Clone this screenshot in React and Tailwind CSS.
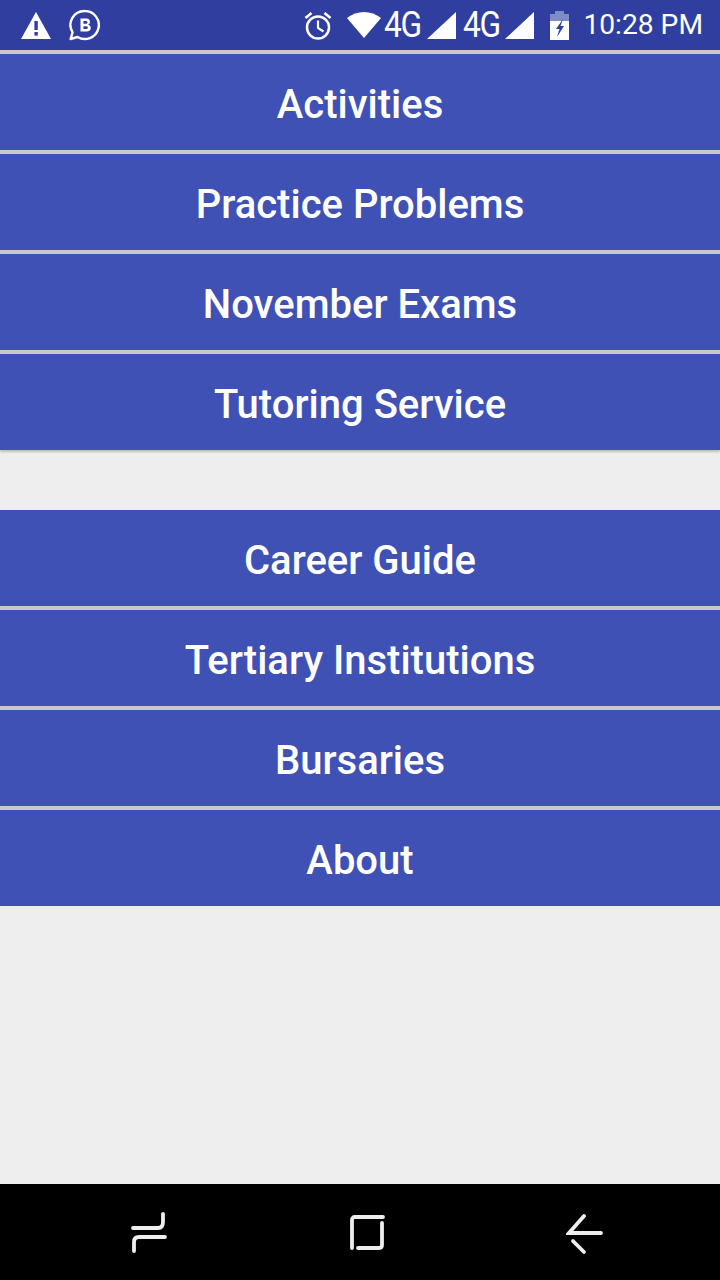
import React from 'react';

const topItems = ['Activities', 'Practice Problems', 'November Exams', 'Tutoring Service'];
const bottomItems = ['Career Guide', 'Tertiary Institutions', 'Bursaries', 'About'];

const MenuButton = ({ label, last }) => (
    <div className={`h-[96px] bg-[#3f51b5] flex items-center justify-center text-white text-[40px] font-medium pt-[6px] ${last ? '' : 'mb-[4px]'}`}>
        {label}
    </div>
);

const FourG = () => (
    <span className="w-[38px] text-[36px] leading-none text-white font-normal tracking-[-1.5px] scale-x-[0.88] origin-left whitespace-nowrap">4G</span>
);

const Signal = ({ className }) => (
    <svg className={className} width="29" height="27" viewBox="0 0 29 27"><path d="M29 0V27H0Z" fill="#fff" /></svg>
);

const App = () => (
    <div className="w-[720px] h-[1280px] flex flex-col bg-[#eeeeee] font-['Roboto',sans-serif] overflow-hidden">
        {/* Status bar */}
        <div className="h-[50px] bg-[#303f9f] flex items-center justify-between pl-[21px] pr-[17px] shrink-0">
            <div className="flex items-center gap-[17px]">
                <svg width="30" height="27" viewBox="0 0 30 27">
                    <path d="M15 0L30 27H0Z" fill="#fff" />
                    <rect x="13.4" y="9" width="3.4" height="9" fill="#303f9f" />
                    <rect x="13.4" y="20" width="3.4" height="3.6" fill="#303f9f" />
                </svg>
                <svg width="32" height="32" viewBox="0 0 32 32">
                    <path d="M17 2A14 14 0 1 1 9.6 28L2.6 30L4.6 23.4A14 14 0 0 1 17 2Z" fill="none" stroke="#fff" strokeWidth="2.4" strokeLinejoin="round" />
                    <path d="M12.5 9.5H18.5C23 9.5 23 15.4 19.6 15.8C24 16 24 22.5 18.7 22.5H12.5ZM15.4 12V14.8H18C20 14.8 20 12 18 12ZM15.4 17.2V20H18.2C20.5 20 20.5 17.2 18.2 17.2Z" fill="#fff" fillRule="evenodd" />
                </svg>
            </div>
            <div className="flex items-center">
                <svg width="28" height="29" viewBox="0 0 28 29" className="mr-[15px]">
                    <circle cx="14" cy="16.5" r="11" fill="none" stroke="#fff" strokeWidth="2.5" />
                    <path d="M14 9.5V17L19.5 20.5" fill="none" stroke="#fff" strokeWidth="2.2" />
                    <path d="M1.5 7L7.5 2M26.5 7L20.5 2" fill="none" stroke="#fff" strokeWidth="2.6" />
                </svg>
                <svg width="34" height="26" viewBox="0 0 34 26" className="mr-[3px]">
                    <path d="M17 26L0 6C10 -2 24 -2 34 6Z" fill="#fff" />
                </svg>
                <FourG />
                <Signal className="ml-[5px] mr-[7px]" />
                <FourG />
                <Signal className="ml-[4px] mr-[16px]" />
                <svg width="19" height="29" viewBox="0 0 19 29" className="mr-[14px]">
                    <path d="M5 0H14V3H19V29H0V3H5Z" fill="#fff" fillOpacity="0.4" />
                    <rect y="10" width="19" height="19" fill="#fff" />
                    <path d="M13 8L6 18H9.5L7 26L14 15H10.5Z" fill="#303f9f" />
                </svg>
                <span className="text-white text-[28.2px] leading-none whitespace-nowrap">10:28 PM</span>
            </div>
        </div>

        {/* Menu groups */}
        <div className="pt-[4px] bg-[#c9c9c9] shrink-0 shadow-[0_2px_2px_rgba(0,0,0,0.2)]">
            {topItems.map((item, i) => <MenuButton key={item} label={item} last={i === topItems.length - 1} />)}
        </div>
        <div className="h-[60px] shrink-0" />
        <div className="bg-[#c9c9c9] shrink-0">
            {bottomItems.map((item, i) => <MenuButton key={item} label={item} last={i === bottomItems.length - 1} />)}
        </div>
        <div className="flex-1" />

        {/* Navigation bar */}
        <div className="h-[96px] bg-black flex items-center justify-between pl-[130px] pr-[116px] shrink-0">
            <svg width="38" height="42" viewBox="0 0 38 42" fill="none" stroke="#eeeeee" strokeWidth="3.8" strokeLinecap="round">
                <path d="M3 17H28Q33 17 33 11V3" />
                <path d="M35 26H9Q4 26 4 31V40" />
            </svg>
            <svg width="36" height="36" viewBox="0 0 36 36" fill="none" stroke="#eeeeee" strokeWidth="3.8" strokeLinecap="round">
                <path d="M3 34V6Q3 3 6 3H34" />
                <path d="M33 9V31Q33 34 30 34H9" />
            </svg>
            <svg width="38" height="42" viewBox="0 0 38 42" fill="none" stroke="#eeeeee" strokeWidth="3.8" strokeLinecap="round" className="mt-[4px]">
                <path d="M18 3L3 20H35" />
                <path d="M7 28L18 39" />
            </svg>
        </div>
    </div>
);

export default App;
